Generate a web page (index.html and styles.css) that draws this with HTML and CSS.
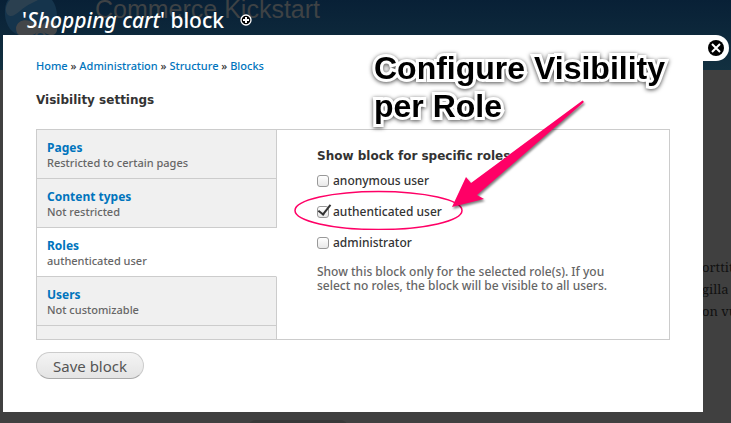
FILE: index.html
```html
<!DOCTYPE html>
<html lang="en">
<head>
    <meta charset="UTF-8">
    <meta name="viewport" content="width=device-width, initial-scale=1.0">
    <title>'Shopping cart' block</title>
    <link rel="stylesheet" href="styles.css">
</head>
<body>
    <!-- Dimmed page behind the overlay -->
    <div class="backdrop">
        <div class="site-header">
            <svg class="site-logo" viewBox="0 0 60 40" width="60" height="40" aria-hidden="true">
                <path d="M8 0C3 7 4 21 10 29C16 36 26 38 34 38C46 38 57 30 57 17C57 9 55 4 52 0Z" fill="#15344c"/>
                <path d="M10 0C4 6 5 15 10 16C16 17 22 7 32 3L38 0Z" fill="#2b4050"/>
                <path d="M16 28C17 20 27 18 34 23C38 26 40 27 43 24C48 18 56 20 57 27C58 33 54 36 50 35C46 34 42 30 38 32C33 36 24 38 19 35C17 34 16 31 16 28Z" fill="#434649"/>
                <path d="M36 35C38 31 43 31 45 35" fill="none" stroke="#434649" stroke-width="2"/>
            </svg>
            <span class="site-name">Commerce Kickstart</span>
        </div>
        <p class="site-text">orttit<br>gilla<br>on vu</p>
        <div class="site-box"></div>
    </div>

    <div class="overlay">
        <header class="overlay-title">
            <h1>'<em>Shopping cart</em>' block</h1>
            <button class="icon-button" type="button" aria-label="Add to shortcuts">
                <svg viewBox="0 0 12 12" width="12" height="12">
                    <circle cx="6" cy="6" r="5" fill="#000" stroke="#fff" stroke-width="1.3"/>
                    <path d="M6 3V9M3 6H9" stroke="#fff" stroke-width="2"/>
                </svg>
            </button>
        </header>

        <main class="overlay-content">
            <button class="overlay-close" type="button" aria-label="Close overlay">
                <svg viewBox="0 0 16 16" width="16" height="16">
                    <circle cx="8" cy="8" r="8" fill="#000"/>
                    <path d="M4 4L12 12M12 4L4 12" stroke="#fff" stroke-width="2"/>
                </svg>
            </button>

            <nav class="breadcrumb">
                <a href="#">Home</a> » <a href="#">Administration</a> » <a href="#">Structure</a> » <a href="#">Blocks</a>
            </nav>

            <form>
                <h2 class="section-title">Visibility settings</h2>
                <div class="vertical-tabs">
                    <ul class="tab-list">
                        <li class="tab"><a href="#"><strong>Pages</strong><span>Restricted to certain pages</span></a></li>
                        <li class="tab"><a href="#"><strong>Content types</strong><span>Not restricted</span></a></li>
                        <li class="tab selected"><a href="#"><strong>Roles</strong><span>authenticated user</span></a></li>
                        <li class="tab"><a href="#"><strong>Users</strong><span>Not customizable</span></a></li>
                    </ul>
                    <fieldset class="tab-pane">
                        <legend>Show block for specific roles</legend>
                        <label class="role"><input type="checkbox"> anonymous user</label>
                        <label class="role"><input type="checkbox" checked> authenticated user</label>
                        <label class="role"><input type="checkbox"> administrator</label>
                        <p class="description">Show this block only for the selected role(s). If you select no roles, the block will be visible to all users.</p>
                    </fieldset>
                </div>
                <button class="save-button" type="submit">Save block</button>
            </form>
        </main>
    </div>

    <!-- Callout drawn over the form -->
    <div class="callout">Configure Visibility<br>per Role</div>
    <svg class="callout-marks" viewBox="0 0 300 140" width="300" height="140" aria-hidden="true">
        <ellipse cx="88.500" cy="120.500" rx="83.500" ry="19" fill="none" stroke="#f06" stroke-width="1.500"/>
        <path class="arrow" d="M292.500 10.500Q294 11 293.500 12.500L187 105L194 109L162 117L176 87L181 93Z" fill="#f06"/>
    </svg>
</body>
</html>
```

FILE: styles.css
```css
* {
    box-sizing: border-box;
}

body {
    margin: 0;
    min-height: 100vh;
    background: #404040;
    color: #333;
    font-family: "Noto Sans", "Open Sans", sans-serif;
    font-size: 12px;
    line-height: 16px;
    overflow: hidden;
}

h1,
h2,
p,
ul {
    margin: 0;
    padding: 0;
}

a {
    color: #0074bd;
    text-decoration: none;
}

button {
    font-family: inherit;
    cursor: pointer;
}

svg {
    display: block;
}

.backdrop {
    position: absolute;
    inset: 0;
    overflow: hidden;
    z-index: -1;
}

.site-header {
    display: flex;
    height: 70px;
    background: linear-gradient(#082036, #123040);
}

.site-name {
    margin-left: 35px;
    color: #3e4245;
    font: 25px/18px "Liberation Sans", Arial, sans-serif;
}

.site-text {
    position: absolute;
    top: 256px;
    left: 702px;
    color: #111;
    font: 13px/22px "Noto Serif", "DejaVu Serif", "Liberation Serif", serif;
    white-space: nowrap;
}

.site-box {
    position: absolute;
    top: 420px;
    left: 248px;
    width: 100px;
    height: 20px;
    border-radius: 8px;
    background: #383838;
}

.overlay {
    margin: 0 28px 11px 3px;
}

.overlay-title {
    display: flex;
    align-items: center;
    gap: 16px;
    height: 35px;
    padding: 4px 19px 0;
}

.overlay-title h1 {
    color: #fff;
    font-size: 21px;
    font-weight: 500;
    line-height: 30px;
}

.icon-button {
    padding: 0;
    border: 0;
    background: none;
}

.overlay-content {
    position: relative;
    padding: 24px 33px 33px;
    background: #fff;
}

.overlay-close {
    position: absolute;
    top: 0;
    right: -26px;
    width: 26px;
    height: 26px;
    padding: 5px;
    border: 0;
    border-radius: 0 13px 13px 0;
    background: #fff;
}

.breadcrumb {
    font-size: 11px;
    font-weight: 500;
    line-height: 14px;
}

.section-title,
.tab-pane legend {
    font-family: "DejaVu Sans", Verdana, sans-serif;
    font-size: 12px;
    font-weight: bold;
}

.section-title {
    margin: 19px 0 20px;
    line-height: 17px;
}

.vertical-tabs {
    display: flex;
    min-height: 211px;
    border: 1px solid #ccc;
}

.tab-list {
    flex: 0 0 240px;
    display: flex;
    flex-direction: column;
    list-style: none;
}

.tab-list::after {
    content: "";
    flex: 1;
    border-right: 1px solid #ccc;
    background: #f0f0f0;
}

.tab {
    height: 49px;
    padding: 10px 10px 0;
    border-right: 1px solid #ccc;
    border-bottom: 1px solid #ccc;
    background: #f0f0f0;
}

.tab.selected {
    border-right-color: #fff;
    background: #fff;
}

.tab strong,
.tab span {
    display: block;
}

.tab span {
    color: #666;
    font-size: 11px;
    font-weight: 500;
    line-height: 14px;
}

.tab-pane {
    flex: 1;
    min-width: 0;
    margin: 0;
    padding: 18px 40px 0;
    border: 0;
}

.tab-pane legend {
    float: left;
    width: 100%;
    margin-bottom: 8px;
    padding: 0;
}

.role {
    display: flex;
    clear: both;
    align-items: center;
    gap: 4px;
    margin-bottom: 13px;
    font-weight: 500;
    line-height: 18px;
}

.role input {
    appearance: none;
    position: relative;
    width: 12px;
    height: 12px;
    margin: 0;
    border: 1px solid #999;
    border-radius: 3px;
    background: linear-gradient(#fff, #e8e8e8);
}

.role input:checked::after {
    content: "";
    position: absolute;
    left: 3px;
    bottom: 2px;
    width: 5px;
    height: 11px;
    border: solid #333;
    border-width: 0 2px 2px 0;
    transform: rotate(38deg);
}

.description {
    color: #666;
    font-weight: 500;
    line-height: 14px;
}

.save-button {
    display: block;
    height: 27px;
    margin-top: 12px;
    padding: 0 16px;
    border: 1px solid #ccc;
    border-bottom-color: #aaa;
    border-radius: 14px;
    background: linear-gradient(#f4f4f4, #e4e4e4);
    color: #555;
    font-size: 15px;
    line-height: 24px;
}

.callout {
    position: absolute;
    top: 49px;
    left: 374px;
    color: #000;
    font: bold 32px/38px "Liberation Sans", Arial, sans-serif;
    -webkit-text-stroke: 6px #fff;
    paint-order: stroke fill;
    filter: drop-shadow(0 1px 2px rgba(0, 0, 0, 0.7));
}

.callout-marks {
    position: absolute;
    top: 90px;
    left: 290px;
    pointer-events: none;
}

.arrow {
    filter: drop-shadow(1px 2px 1px rgba(0, 0, 0, 0.5));
}
```
